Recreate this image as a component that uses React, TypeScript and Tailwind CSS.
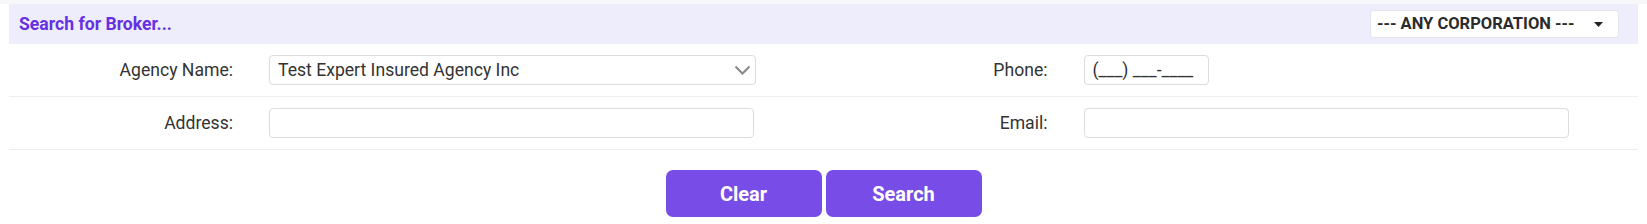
import React from "react";

const inputCls =
  "h-[30px] rounded-[4px] border border-[#dcdcdc] bg-white px-2 text-[17.6px] text-[#333] outline-none";

const Field: React.FC<{ label: string; children: React.ReactNode }> = ({ label, children }) => (
  <div className="flex items-center">
    <label className="w-[224px] shrink-0 text-right text-[17.6px] text-[#333]">{label}</label>
    <div className="ml-[36px] flex-1">{children}</div>
  </div>
);

export default function App() {
  return (
    <div className="min-h-screen bg-white font-['Roboto',sans-serif]">
      <div className="h-[4px] bg-[#f7f7f9]" />
      <div className="mx-[9px] w-[1629px]">
        <div className="flex h-[40px] items-center justify-between bg-[#ededfc] pl-[10px] pr-[19px]">
          <h2 className="text-[17.6px] font-bold text-[#6730e3]">Search for Broker...</h2>
          <div className="flex h-[28px] w-[249px] items-center justify-between rounded-[3px] border border-[#e4e4ec] bg-white pl-[6px] pr-[15px]">
            <span className="text-[16.5px] font-bold text-[#2b2b2b]">--- ANY CORPORATION ---</span>
            <svg width="9" height="5" viewBox="0 0 9 5">
              <path d="M0 0h9L4.5 5z" fill="#222" />
            </svg>
          </div>
        </div>

        <div className="grid h-[53px] grid-cols-2 items-center border-b border-[#eeeeee]">
          <Field label="Agency Name:">
            <div className={`${inputCls} flex w-[487px] items-center justify-between pr-[4px]`}>
              <span>Test Expert Insured Agency Inc</span>
              <svg width="17" height="10" viewBox="0 0 17 10" fill="none">
                <path d="M1.5 1.5L8.5 8.5l7-7" stroke="#888" strokeWidth="2" />
              </svg>
            </div>
          </Field>
          <Field label="Phone:">
            <input className={`${inputCls} w-[125px]`} defaultValue="(___) ___-____" />
          </Field>
        </div>

        <div className="grid h-[53px] grid-cols-2 items-center border-b border-[#eeeeee]">
          <Field label="Address:">
            <input className={`${inputCls} w-[485px]`} />
          </Field>
          <Field label="Email:">
            <input className={`${inputCls} w-[485px]`} />
          </Field>
        </div>

        <div className="flex justify-center gap-[4px] pt-[20px]">
          <button className="h-[47px] w-[156px] rounded-[7px] bg-[#784ce7] text-[20px] font-bold text-white">
            Clear
          </button>
          <button className="h-[47px] w-[156px] rounded-[7px] bg-[#784ce7] text-[20px] font-bold text-white">
            Search
          </button>
        </div>
      </div>
    </div>
  );
}
